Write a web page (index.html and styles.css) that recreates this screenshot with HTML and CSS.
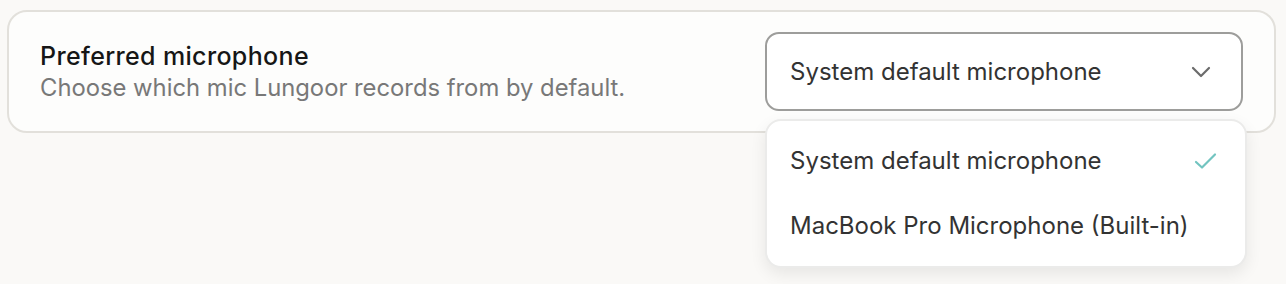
FILE: index.html
```html
<!DOCTYPE html>
<html lang="en">
<head>
  <meta charset="UTF-8">
  <meta name="viewport" content="width=device-width, initial-scale=1.0">
  <title>Preferred microphone</title>
  <link rel="stylesheet" href="styles.css">
</head>
<body>
  <div class="setting-card">
    <div class="setting-info">
      <div class="setting-title">Preferred microphone</div>
      <div class="setting-desc">Choose which mic Lungoor records from by default.</div>
    </div>
    <div class="select-wrap">
      <button class="select-box">
        <span>System default microphone</span>
        <svg class="chevron" width="20" height="12" viewBox="0 0 20 12">
          <path d="M2 2 L10 10 L18 2" fill="none" stroke="#6b6b6b" stroke-width="2.2" stroke-linecap="round" stroke-linejoin="round"/>
        </svg>
      </button>
      <!-- 下拉菜单 -->
      <div class="select-menu">
        <div class="menu-item selected">
          <span>System default microphone</span>
          <svg class="check" width="24" height="18" viewBox="0 0 24 18">
            <path d="M2 10 L8 15.5 L21 2.5" fill="none" stroke="#72c4c0" stroke-width="2.2" stroke-linecap="round" stroke-linejoin="round"/>
          </svg>
        </div>
        <div class="menu-item">
          <span>MacBook Pro Microphone (Built-in)</span>
        </div>
      </div>
    </div>
  </div>
</body>
</html>
```

FILE: styles.css
```css
body {
  margin: 0;
  padding: 10px 10px 0 7px;
  background-color: #faf9f7;
  font-family: Inter, 'Helvetica Neue', Arial, sans-serif;
  height: 284px;
  box-sizing: border-box;
}
.setting-card {
  display: flex;
  align-items: center;
  justify-content: space-between;
  padding: 20px 31px 20px 31px;
  background-color: #fdfdfc;
  border: 2px solid #e2e0db;
  border-radius: 20px;
}
.setting-title {
  font-size: 25px;
  font-weight: 500;
  letter-spacing: 0.35px;
  color: #161616;
  line-height: 32px;
}
.setting-desc {
  font-size: 23.8px;
  color: #787878;
  line-height: 32px;
}
.select-wrap {
  position: relative;
  width: 478px;
}
.select-box {
  display: flex;
  align-items: center;
  justify-content: space-between;
  width: 100%;
  height: 79px;
  margin: 0;
  padding: 0 30px 0 23px;
  box-sizing: border-box;
  background-color: #fff;
  border: 2px solid #9d9d9b;
  border-radius: 14px;
  font-family: inherit;
  font-size: 24px;
  color: #333;
  cursor: pointer;
}
.select-menu {
  position: absolute;
  top: 87px;
  left: 0;
  right: -4px;
  padding: 7px 0 8px;
  background-color: #fff;
  border: 2px solid #ebebea;
  border-radius: 16px;
  box-shadow: 0 6px 16px rgba(0,0,0,0.08);
}
.menu-item {
  display: flex;
  align-items: center;
  justify-content: space-between;
  height: 65px;
  padding: 0 27px 0 23px;
  font-size: 24px;
  color: #333;
}
```
